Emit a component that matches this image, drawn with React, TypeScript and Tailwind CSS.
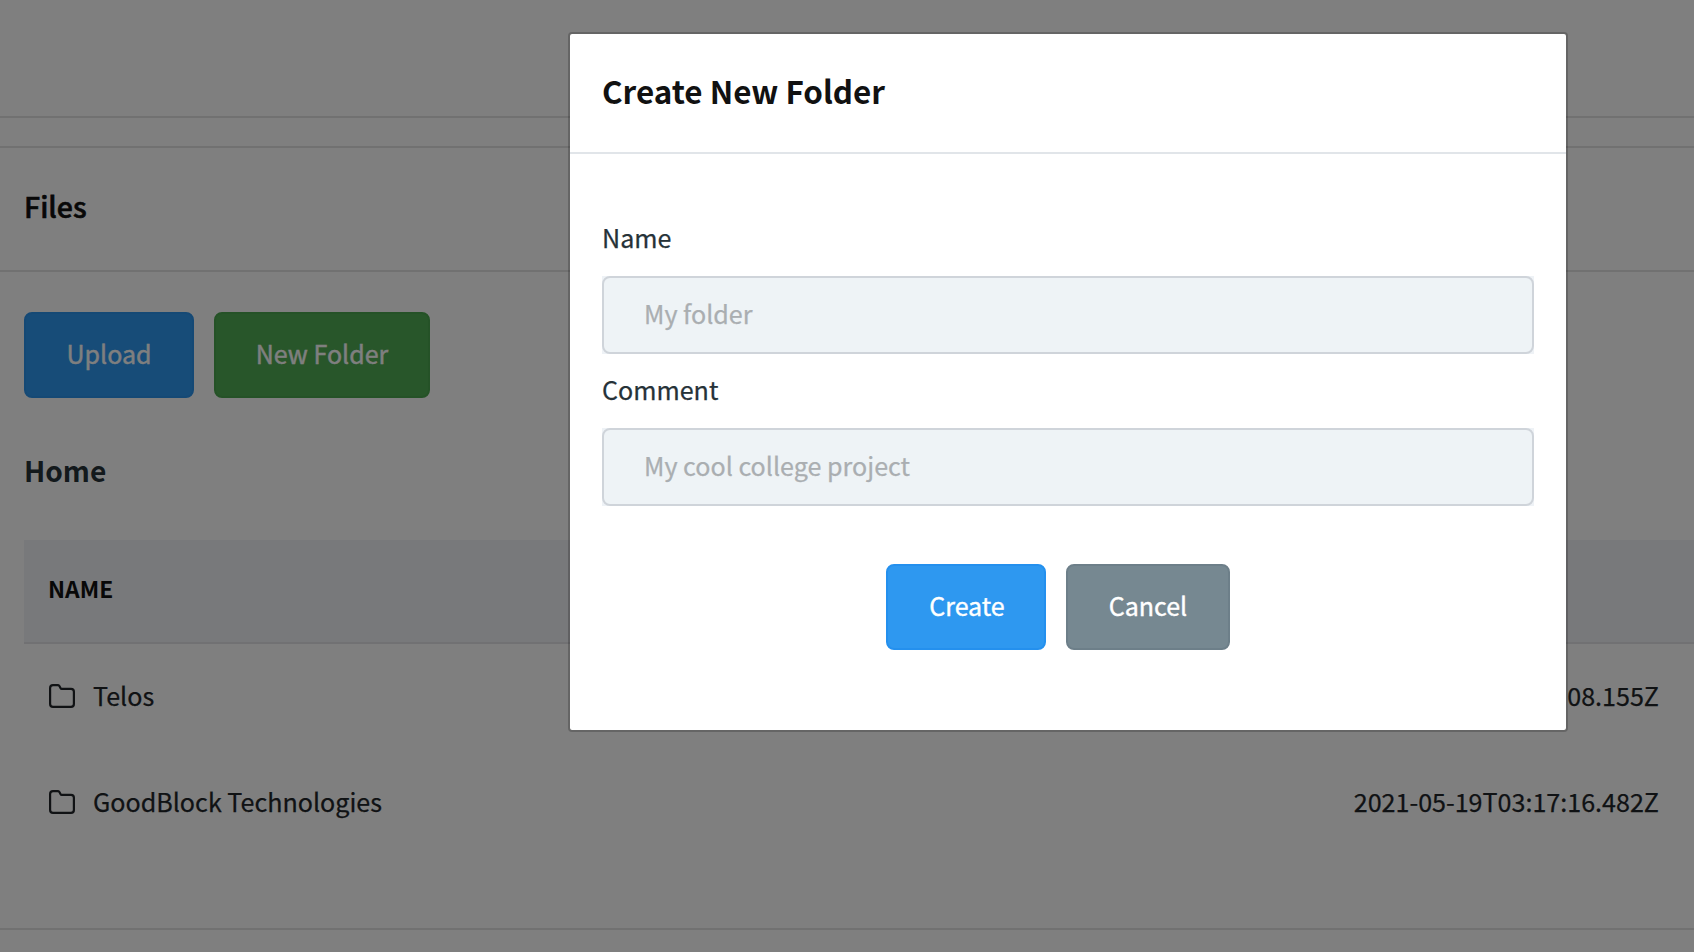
import type { ReactNode } from "react";

const files = [
  { name: "Telos", date: "2021-05-19T03:17:08.155Z" },
  { name: "GoodBlock Technologies", date: "2021-05-19T03:17:16.482Z" },
];

function FolderIcon() {
  return (
    <svg className="mb-px h-6 w-[26px] shrink-0" viewBox="0 0 26 24" fill="none" stroke="currentColor" strokeWidth="2.2" strokeLinejoin="round">
      <path d="M4 1.1H8.6Q9.8 1.1 10.4 2L11.6 4.2Q11.9 4.8 12.7 4.8H22Q24.9 4.8 24.9 7.8V20Q24.9 22.9 22 22.9H4Q1.1 22.9 1.1 20V4Q1.1 1.1 4 1.1Z" />
    </svg>
  );
}

function Button({ className, children }: { className: string; children: ReactNode }) {
  return (
    <button className={`flex h-[86px] items-center justify-center rounded-lg border-2 pb-[3px] text-[25px] text-white [-webkit-text-stroke:0.4px] ${className}`}>
      {children}
    </button>
  );
}

function Field({ label, placeholder }: { label: string; placeholder: string }) {
  return (
    <label className="flex flex-col">
      <span className="flex h-[74px] items-center pb-0.5 text-[25.1px] text-[#263238]">{label}</span>
      <span className="bg-[#eef2f6]">
        <input
          className="block h-[78px] w-full rounded-lg border-2 border-[#cfd4da] bg-[#eef3f6] px-10 pb-[5px] text-[25.1px] text-[#263238] placeholder:text-[#aaaeb1]"
          placeholder={placeholder}
        />
      </span>
    </label>
  );
}

export default function App() {
  return (
    <div className="relative h-[952px] w-full overflow-hidden bg-white font-['Noto_Sans_CJK_SC','Noto_Sans',sans-serif] [-webkit-text-stroke:0.25px]">
      <div className="h-[118px] border-b-2 border-[#e2e2e3]" />
      <section className="mt-7 h-[784px] border-y-2 border-[#e2e2e3]">
        <header className="flex h-[124px] items-center border-b-2 border-[#e2e2e3] pb-1.5 pl-6">
          <h2 className="text-[28.5px] font-medium text-[#111] [-webkit-text-stroke:0.6px]">Files</h2>
        </header>
        <div className="pt-10 pl-6">
          <div className="flex gap-5">
            <Button className="w-[170px] border-[#2a92ea] bg-[#2e98f0]">Upload</Button>
            <Button className="w-[216px] border-[#4aa54e] bg-[#50ac54]">New Folder</Button>
          </div>
          <h3 className="mt-11 flex h-[58px] items-center pb-0.5 text-[28.1px] font-bold text-[#263238] [-webkit-text-stroke:0px]">Home</h3>
          <div className="mt-10 flex h-[104px] items-center border-b-2 border-[#e2e3e6] bg-[#f0f2f6] pb-1 pl-6 text-[22.8px] font-bold text-[#111] [-webkit-text-stroke:0px]">
            NAME
          </div>
          {files.map((file) => (
            <div key={file.name} className="flex h-[106px] items-center pr-[35px] pb-0.5 pl-[25px] text-[25.1px] text-[#212529]">
              <FolderIcon />
              <span className="ml-[18px]">{file.name}</span>
              <span className="ml-auto">{file.date}</span>
            </div>
          ))}
        </div>
      </section>

      <div className="absolute inset-0 flex items-start bg-black/50 pt-8 pl-[568px]">
        <div role="dialog" className="h-[700px] w-[1000px] rounded border-2 border-black/20 bg-white bg-clip-padding">
          <header className="flex h-[120px] items-center border-b-2 border-[#e1e5e9] px-8 pb-1">
            <h1 className="text-[31.4px] font-bold text-[#111] [-webkit-text-stroke:0px]">Create New Folder</h1>
          </header>
          <div className="px-8 pt-12">
            <Field label="Name" placeholder="My folder" />
            <Field label="Comment" placeholder="My cool college project" />
            <div className="mt-[58px] flex gap-5 pl-[284px]">
              <Button className="w-40 border-[#2490ee] bg-[#2e98f0] pl-0.5">Create</Button>
              <Button className="w-[164px] border-[#6d7f89] bg-[#768891]">Cancel</Button>
            </div>
          </div>
        </div>
      </div>
    </div>
  );
}
